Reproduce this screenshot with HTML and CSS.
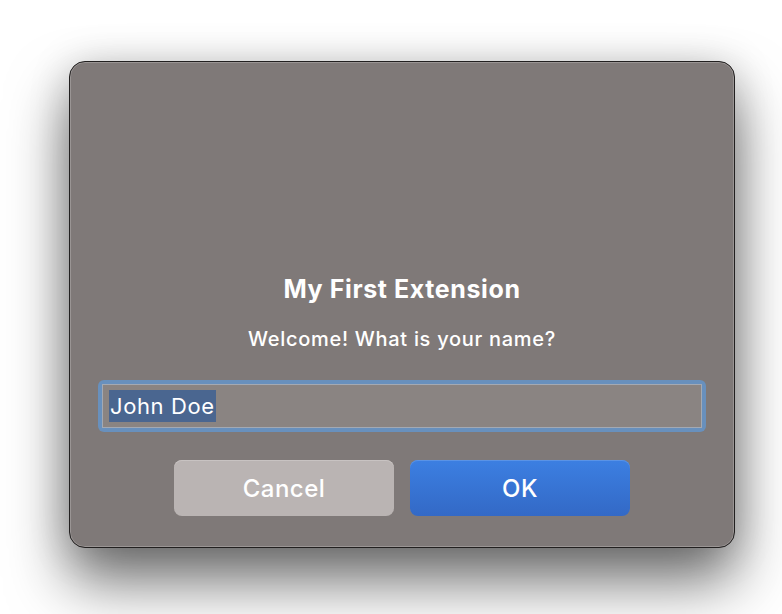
FILE: index.html
```html
<!DOCTYPE html>
<html>
<head>
<meta charset="utf-8">
<link rel="stylesheet" href="styles.css">
</head>
<body>
<div class="dialog">
  <h1 class="title">My First Extension</h1>
  <p class="message">Welcome! What is your name?</p>
  <div class="field-ring">
    <div class="field"><span class="sel">John Doe</span></div>
  </div>
  <div class="buttons">
    <button class="btn cancel">Cancel</button>
    <button class="btn ok">OK</button>
  </div>
</div>
</body>
</html>
```
FILE: styles.css
```css
html, body {
  margin: 0;
  height: 100%;
}
body {
  background: #ffffff;
  padding: 61px 0 0 69px;
  box-sizing: border-box;
  font-family: Inter, "Noto Sans", sans-serif;
  overflow: hidden;
}
.dialog {
  width: 666px;
  height: 487px;
  box-sizing: border-box;
  background: #7f7978;
  border: 1px solid #222020;
  border-radius: 16px;
  box-shadow: inset 0 0 0 1px #9a9594, 0 34px 60px rgba(0,0,0,0.55), 0 4px 40px rgba(0,0,0,0.18);
  display: flex;
  flex-direction: column;
  align-items: center;
  justify-content: flex-end;
  padding: 0 28px 31px;
}
.title {
  margin: 0;
  font-size: 25px;
  line-height: 28px;
  font-weight: 700;
  color: #fff;
  letter-spacing: 0.6px;
}
.message {
  margin: 24px 0 0;
  font-size: 20px;
  line-height: 24px;
  font-weight: 550;
  color: #fff;
  letter-spacing: 0.7px;
}
.field-ring {
  margin-top: 29px;
  width: 100%;
  height: 52px;
  box-sizing: border-box;
  border-radius: 6px;
  background: #6890bd;
  padding: 4px;
}
.field {
  height: 100%;
  box-sizing: border-box;
  background: #8a8482;
  border: 1px solid #a3a9b3;
  padding: 5px 0 0 6px;
}
.sel {
  display: inline-block;
  background: #4a6690;
  color: #fff;
  font-size: 22px;
  line-height: 32px;
  letter-spacing: 0.6px;
  padding: 0 1px;
}
.buttons {
  margin-top: 28px;
  display: flex;
  gap: 16px;
}
.btn {
  width: 220px;
  height: 56px;
  border: none;
  border-radius: 8px;
  font-family: Inter, "Noto Sans", sans-serif;
  font-size: 24px;
  font-weight: 500;
  letter-spacing: 0.5px;
  color: #fff;
}
.cancel {
  background: #bab4b3;
  box-shadow: inset 0 1px 0 #c8c3c2;
}
.ok {
  background: linear-gradient(#3c7fe2, #3369c6);
  box-shadow: inset 0 1px 0 #5a93e6;
}
```
